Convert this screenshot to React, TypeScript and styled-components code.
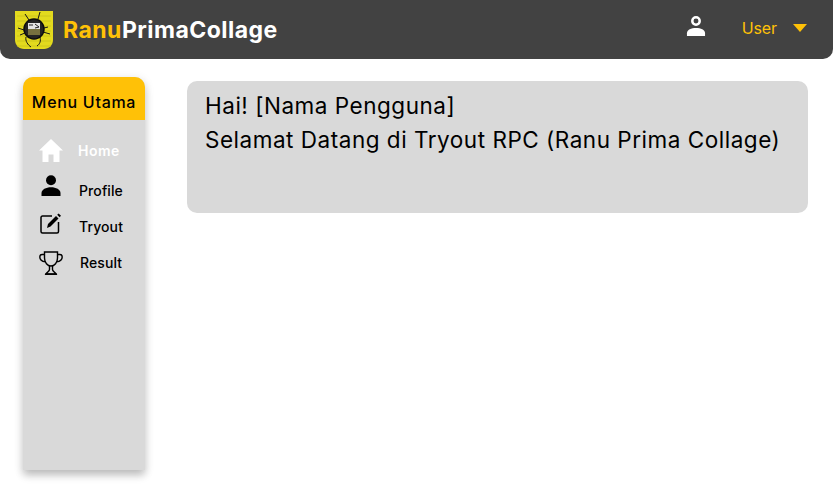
import React from "react";
import styled, { createGlobalStyle } from "styled-components";

const Global = createGlobalStyle`
  html, body { margin: 0; padding: 0; background: #fff; }
  body { font-family: Inter, "Open Sans", "Liberation Sans", sans-serif; overflow: hidden; }
`;

const Page = styled.div`
  width: 833px;
  height: 490px;
  display: flex;
  flex-direction: column;
`;

const TopBar = styled.header`
  height: 59px;
  flex: none;
  background: #424242;
  border-radius: 0 0 10px 10px;
  display: flex;
  align-items: center;
  padding: 0 26px 0 15px;
`;

const Brand = styled.div`
  display: flex;
  align-items: center;
  gap: 10px;
  flex: 1;
`;

const BrandName = styled.div`
  font-size: 23px;
  font-weight: 700;
  letter-spacing: 0.47px;
  color: #fff;
  span { color: #ffc107; }
`;

const UserBlock = styled.div`
  display: flex;
  align-items: center;
  margin-bottom: 3px;
`;

const UserGlyph = styled.div`
  display: flex;
  margin-bottom: 5px;
`;

const UserName = styled.span`
  font-size: 16px;
  color: #ffc107;
  margin: 0 16px 0 36px;
  letter-spacing: -0.1px;
`;

const Body = styled.div`
  flex: 1;
  display: flex;
  align-items: flex-start;
`;

const Sidebar = styled.aside`
  width: 122px;
  height: 393px;
  margin: 18px 0 0 23px;
  background: #d9d9d9;
  border-radius: 10px 10px 0 0;
  box-shadow: 0 6px 8px -1px rgba(0, 0, 0, 0.22), 0 2px 9px 2px rgba(0, 0, 0, 0.08);
  flex: none;
`;

const SideHead = styled.div`
  height: 43px;
  box-sizing: border-box;
  padding-top: 6px;
  background: #ffc107;
  border-radius: 10px 10px 0 0;
  display: flex;
  align-items: center;
  justify-content: center;
  font-size: 16px;
  font-weight: 500;
  letter-spacing: 0.7px;
  color: #000;
  white-space: nowrap;
`;

const Nav = styled.nav`
  display: flex;
  flex-direction: column;
  padding-top: 12px;
`;

const NavRow = styled.div<{ $gap?: number }>`
  height: 36px;
  margin-bottom: ${(p) => p.$gap ?? 0}px;
  display: grid;
  grid-template-columns: 56px 1fr;
  align-items: center;
`;

const NavIcon = styled.div<{ $up?: number }>`
  display: flex;
  justify-content: center;
  margin-top: ${(p) => (p.$up ? -p.$up : 0)}px;
`;

const NavLabel = styled.span<{ $active?: boolean; $x?: number }>`
  font-size: 14px;
  font-weight: ${(p) => (p.$active ? 600 : 500)};
  letter-spacing: ${(p) => (p.$active ? 0.5 : 0.1)}px;
  color: ${(p) => (p.$active ? "#fff" : "#000")};
  margin-left: ${(p) => p.$x ?? 0}px;
`;

const Welcome = styled.main`
  width: 621px;
  height: 132px;
  margin: 22px 0 0 42px;
  box-sizing: border-box;
  padding: 8px 18px;
  background: #d9d9d9;
  border-radius: 10px;
  font-size: 22.5px;
  letter-spacing: 0.52px;
  line-height: 34px;
  color: #000;
  white-space: nowrap;
`;

const Logo = () => (
  <svg width="38" height="38" viewBox="0 0 38 38">
    <path d="M0 0H38V29C38 34 34 38 29 38H9C4 38 0 34 0 29Z" fill="#e3da1e" />
    <path d="M2 5H36M2 10H36M2 15H36M2 20H36M2 25H36M2 30H36M2 35H36" stroke="#c9c11a" strokeWidth="0.8" />
    <g stroke="#151515" strokeWidth="1" fill="none">
      <path d="M10 3L14 9M25 1L23 8M3 17L9 19M5 24L10 22M28 21L35 23M29 17L33 16M11 26C10 30 13 34 16 36M25 26C26 30 25 33 22 35" />
    </g>
    <circle cx="19" cy="18" r="10" fill="#242424" stroke="#0d0d0d" strokeWidth="1.5" />
    <rect x="13" y="12" width="12" height="6" fill="#e4e4e4" />
    <rect x="13" y="18" width="12" height="6" fill="#77713f" />
    <path d="M14 14H18M20 13L24 16L20 17" stroke="#222" strokeWidth="1" fill="none" />
  </svg>
);

const PersonIcon = ({ color, w, h }: { color: string; w: number; h: number }) => (
  <svg width={w} height={h} viewBox="0 0 20 21">
    <circle cx="10" cy="5.2" r="3.9" fill="none" stroke={color} strokeWidth="2.6" />
    <path d="M0.5 21V18C0.5 14.5 5 12.6 10 12.6S19.5 14.5 19.5 18V21Z" fill={color} />
  </svg>
);

const SolidPerson = () => (
  <svg width="20" height="21" viewBox="0 0 20 21">
    <circle cx="10" cy="5.2" r="5" fill="#000" />
    <path d="M0.5 21V18C0.5 14.5 5 12.2 10 12.2S19.5 14.5 19.5 18V21Z" fill="#000" />
  </svg>
);

const Caret = () => (
  <svg width="14" height="8" viewBox="0 0 14 8">
    <path d="M0 0H14L7 8Z" fill="#ffc107" />
  </svg>
);

const HomeIcon = () => (
  <svg width="24" height="23" viewBox="0 0 24 23">
    <path d="M12 0L24 11.5H20.5V23H14.5V15.5H9.5V23H3.5V11.5H0Z" fill="#fff" />
  </svg>
);

const EditIcon = () => (
  <svg width="22" height="21" viewBox="0 0 22 21">
    <path d="M12 3H2.5C1.6 3 1 3.6 1 4.5V18.5C1 19.4 1.6 20 2.5 20H17C17.9 20 18.5 19.4 18.5 18.5V9" fill="none" stroke="#000" strokeWidth="1.5" />
    <path d="M7 15L8 11L16 3L18.5 5.5L10.5 13.5Z" fill="#000" />
    <path d="M17.2 1.8L18.6 0.4L21 2.8L19.6 4.2Z" fill="#000" />
  </svg>
);

const TrophyIcon = () => (
  <svg width="24" height="24" viewBox="0 0 24 24" fill="none" stroke="#000" strokeWidth="1.4">
    <path d="M5.5 1H18.5V7C18.5 11.5 15.5 15 12 15S5.5 11.5 5.5 7Z" />
    <path d="M5.5 3.5H3C1.5 3.5 0.8 4.6 0.8 6C0.8 8.8 3.5 10.5 6.5 10.8" />
    <path d="M18.5 3.5H21C22.5 3.5 23.2 4.6 23.2 6C23.2 8.8 20.5 10.5 17.5 10.8" />
    <path d="M10.5 15V18.5C10.5 20 8.5 21 7 23H17C15.5 21 13.5 20 13.5 18.5V15" />
    <path d="M6 23.2H18" />
  </svg>
);

export default function App() {
  return (
    <Page>
      <Global />
      <TopBar>
        <Brand>
          <Logo />
          <BrandName>
            <span>Ranu</span>PrimaCollage
          </BrandName>
        </Brand>
        <UserBlock>
          <UserGlyph>
            <PersonIcon color="#fff" w={20} h={20} />
          </UserGlyph>
          <UserName>User</UserName>
          <Caret />
        </UserBlock>
      </TopBar>
      <Body>
        <Sidebar>
          <SideHead>Menu Utama</SideHead>
          <Nav>
            <NavRow $gap={4}>
              <NavIcon><HomeIcon /></NavIcon>
              <NavLabel $active $x={-1}>Home</NavLabel>
            </NavRow>
            <NavRow>
              <NavIcon $up={9}><SolidPerson /></NavIcon>
              <NavLabel>Profile</NavLabel>
            </NavRow>
            <NavRow>
              <NavIcon $up={6}><EditIcon /></NavIcon>
              <NavLabel>Tryout</NavLabel>
            </NavRow>
            <NavRow>
              <NavIcon $up={-2}><TrophyIcon /></NavIcon>
              <NavLabel $x={1}>Result</NavLabel>
            </NavRow>
          </Nav>
        </Sidebar>
        <Welcome>
          Hai! [Nama Pengguna]
          <br />
          Selamat Datang di Tryout RPC (Ranu Prima Collage)
        </Welcome>
      </Body>
    </Page>
  );
}
